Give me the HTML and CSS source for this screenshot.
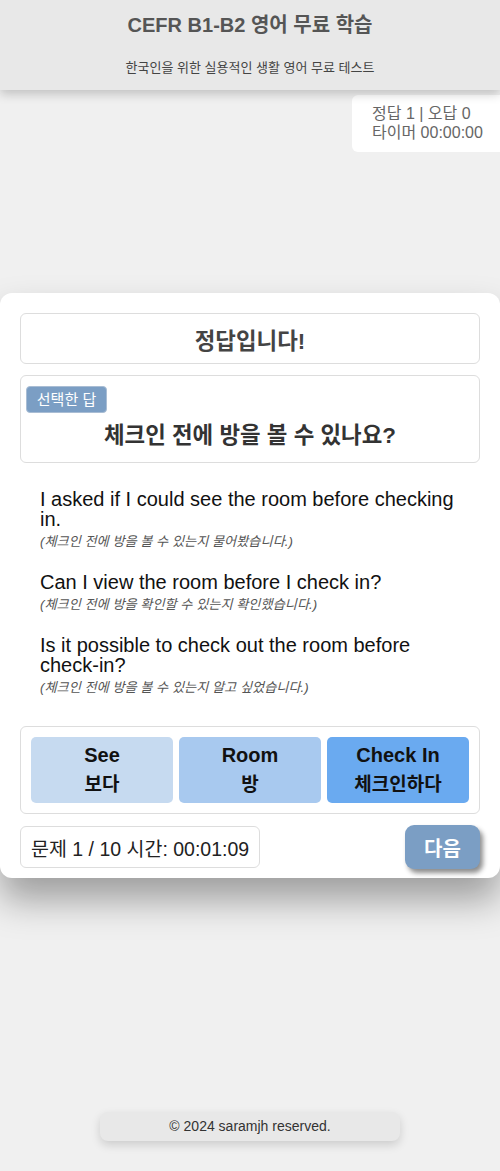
FILE: index.html
```html
<!DOCTYPE html>
<html lang="ko">
<head>
<meta charset="utf-8">
<link rel="stylesheet" href="styles.css">
</head>
<body>
<header class="site-header">
  <h1 class="site-title">CEFR B1-B2 영어 무료 학습</h1>
  <p class="site-sub">한국인을 위한 실용적인 생활 영어 무료 테스트</p>
</header>
<div class="score-row">
  <div class="score-box">
    <div>정답 1 | 오답 0</div>
    <div>타이머 00:00:00</div>
  </div>
</div>
<main class="card">
  <div class="result-box">정답입니다!</div>
  <div class="question-box">
    <span class="badge">선택한 답</span>
    <div class="question">체크인 전에 방을 볼 수 있나요?</div>
  </div>
  <ul class="options">
    <li>
      <div class="en">I asked if I could see the room before checking in.</div>
      <div class="ko">(체크인 전에 방을 볼 수 있는지 물어봤습니다.)</div>
    </li>
    <li>
      <div class="en">Can I view the room before I check in?</div>
      <div class="ko">(체크인 전에 방을 확인할 수 있는지 확인했습니다.)</div>
    </li>
    <li>
      <div class="en">Is it possible to check out the room before check-in?</div>
      <div class="ko">(체크인 전에 방을 볼 수 있는지 알고 싶었습니다.)</div>
    </li>
  </ul>
  <div class="words">
    <div class="word w1"><span>See</span><span>보다</span></div>
    <div class="word w2"><span>Room</span><span>방</span></div>
    <div class="word w3"><span>Check In</span><span>체크인하다</span></div>
  </div>
  <div class="bottom-row">
    <div class="progress">문제 1 / 10 시간: 00:01:09</div>
    <button class="next">다음</button>
  </div>
</main>
<footer class="site-footer">© 2024 saramjh reserved.</footer>
</body>
</html>
```
FILE: styles.css
```css
* { box-sizing: border-box; }
html, body { margin: 0; padding: 0; }
body {
  background: #f0f0f0;
  font-family: "Liberation Sans", "Noto Sans CJK KR", sans-serif;
  color: #222;
  min-height: 1171px;
}
.site-header {
  background: #e8e8e8;
  height: 90px;
  text-align: center;
  padding-top: 13px;
  box-shadow: 0 4px 10px rgba(0,0,0,0.2);
  position: relative;
  z-index: 1;
}
.site-title {
  margin: 0;
  font-size: 20px;
  line-height: 24px;
  font-weight: bold;
  color: #555;
}
.site-sub {
  margin: 22px 0 0;
  font-size: 13px;
  line-height: 18px;
  color: #444;
}
.score-row {
  display: flex;
  justify-content: flex-end;
  margin-top: 5px;
}
.score-box {
  width: 148px;
  height: 57px;
  background: #fff;
  border-radius: 6px 0 0 6px;
  padding: 9px 0 0 20px;
  font-size: 16px;
  line-height: 19px;
  color: #666;
}
.card {
  margin-top: 141px;
  background: #fff;
  border-radius: 12px;
  padding: 20px 20px 9px;
  box-shadow: 0 22px 36px rgba(0,0,0,0.34);
}
.result-box {
  height: 51px;
  border: 1px solid #ddd;
  border-radius: 6px;
  display: flex;
  align-items: center;
  justify-content: center;
  font-size: 22.4px;
  font-weight: bold;
  color: #444;
}
.question-box {
  margin-top: 11px;
  height: 88px;
  border: 1px solid #ddd;
  border-radius: 6px;
  padding: 10px 5px 0;
  text-align: center;
}
.badge {
  display: block;
  width: 81px;
  height: 27px;
  background: #7b9ec4;
  border: 1px solid #a9bdd4;
  border-radius: 4px;
  color: #fff;
  font-size: 15px;
  line-height: 25px;
  text-align: center;
}
.question {
  margin-top: 10px;
  font-size: 22.4px;
  line-height: 26px;
  font-weight: bold;
  color: #333;
}
.options {
  list-style: none;
  margin: 0;
  padding: 26px 20px 30px;
}
.options li { margin-bottom: 22px; }
.options li:last-child { margin-bottom: 0; }
.en {
  font-size: 20px;
  line-height: 20px;
  color: #111;
}
.ko {
  margin-top: 5px;
  font-size: 13.2px;
  line-height: 16px;
  font-style: italic;
  color: #555;
}
.words {
  border: 1px solid #ddd;
  border-radius: 6px;
  padding: 10px;
  display: flex;
  gap: 6px;
  height: 88px;
}
.word {
  flex: 1;
  border-radius: 5px;
  display: flex;
  flex-direction: column;
  align-items: center;
  justify-content: center;
  font-size: 20px;
  line-height: 29px;
  font-weight: bold;
  color: #111;
}
.word span:last-child { font-size: 19px; }
.w1 { background: #c6daf0; }
.w2 { background: #a8c9ef; }
.w3 { background: #6aaaf0; }
.bottom-row {
  margin-top: 11px;
  display: flex;
  justify-content: space-between;
  align-items: flex-start;
}
.progress {
  margin-top: 1px;
  height: 42px;
  padding: 0 10px;
  border: 1px solid #ddd;
  border-radius: 6px;
  display: flex;
  align-items: center;
  font-size: 19.5px;
  color: #222;
}
.next {
  width: 75px;
  height: 44px;
  border: none;
  border-radius: 9px;
  background: #7b9ec4;
  color: #fff;
  font-family: inherit;
  font-size: 20px;
  font-weight: bold;
  box-shadow: 3px 4px 5px rgba(0,0,0,0.45);
}
.site-footer {
  width: 300px;
  height: 29px;
  margin: 234px auto 0;
  background: #e8e8e8;
  border-radius: 8px;
  box-shadow: 0 4px 10px rgba(0,0,0,0.15);
  text-align: center;
  font-size: 14px;
  line-height: 29px;
  color: #333;
}
```
